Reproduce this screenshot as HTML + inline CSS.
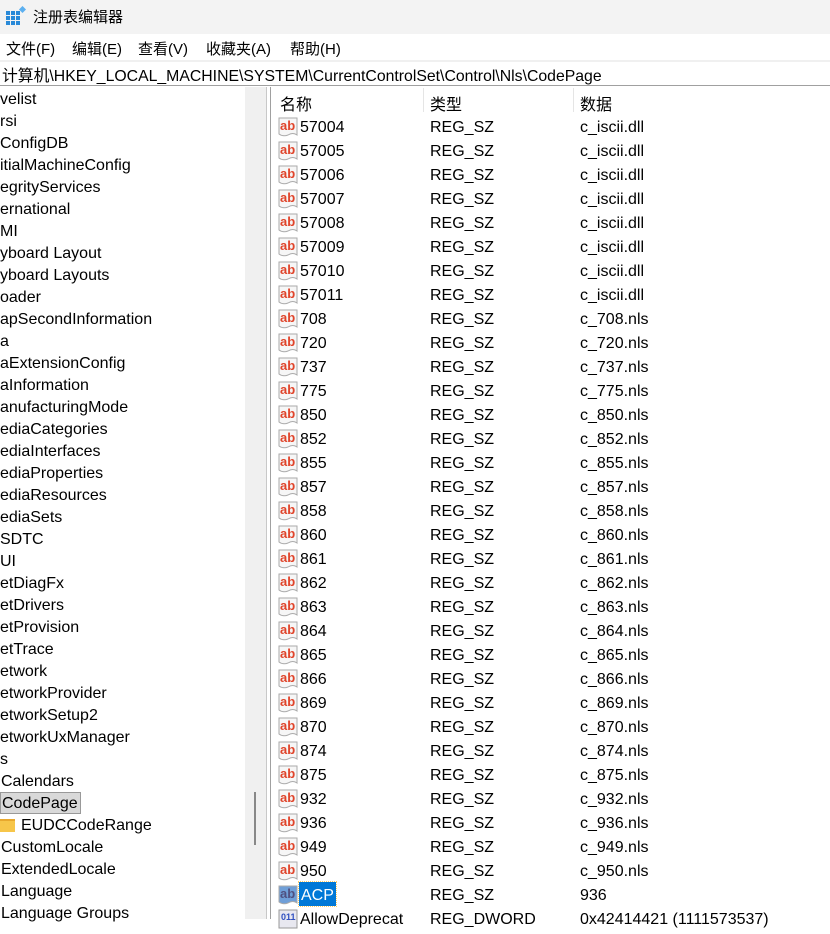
<!DOCTYPE html>
<html><head><meta charset="utf-8"><style>
*{margin:0;padding:0;box-sizing:border-box}
body{width:830px;height:919px;overflow:hidden;background:#fff;font-family:"Liberation Sans","Noto Sans CJK SC",sans-serif;font-size:16px;color:#000;position:relative}
.abs{position:absolute;white-space:nowrap}
#title{left:0;top:0;width:830px;height:34px;background:#f3f3f3}
#menu{left:0;top:34px;width:830px;height:26px;background:#fff;font-size:15px}
#addr{left:0;top:60px;width:830px;height:26px;background:#fff;border-top:2px solid #f0f0f0;border-bottom:1px solid #a0a0a0}
.tr{position:absolute;left:0;height:22px;line-height:24px}
.lr{position:absolute;left:272px;width:558px;height:24px;line-height:28px}
.ic{position:absolute;left:6px;top:3px;width:21px;height:20px}
.n{position:absolute;left:28px}
.t{position:absolute;left:158px}
.d{position:absolute;left:308px}
</style></head><body>
<div class="abs" id="title">
<svg class="abs" style="left:6px;top:6px" width="20" height="20" viewBox="0 0 20 20">
<g fill="#2a8ad8"><rect x="0" y="5" width="4" height="4"/><rect x="5" y="5" width="4" height="4"/><rect x="10" y="5" width="4" height="4"/><rect x="0" y="10" width="4" height="4"/><rect x="5" y="10" width="4" height="4"/><rect x="10" y="10" width="4" height="4"/><rect x="0" y="15" width="4" height="4"/><rect x="5" y="15" width="4" height="4"/><rect x="10" y="15" width="4" height="4"/></g>
<rect x="14" y="1" width="5" height="5" fill="#5cb0f0" transform="rotate(45 16.5 3.5)"/></svg>
<div class="abs" style="left:33px;top:6px;font-size:15px">注册表编辑器</div>
</div>
<div class="abs" id="menu">
<span class="abs" style="left:6px;top:4px">文件(F)</span>
<span class="abs" style="left:72px;top:4px">编辑(E)</span>
<span class="abs" style="left:138px;top:4px">查看(V)</span>
<span class="abs" style="left:206px;top:4px">收藏夹(A)</span>
<span class="abs" style="left:290px;top:4px">帮助(H)</span>
</div>
<div class="abs" id="addr"><span class="abs" style="left:2px;top:1px;font-size:15.8px">计算机\HKEY_LOCAL_MACHINE\SYSTEM\CurrentControlSet\Control\Nls\CodePage</span></div>
<div class="abs" style="left:245px;top:87px;width:21px;height:832px;background:#f0f0f0"></div>
<div class="abs" style="left:254px;top:792px;width:2px;height:53px;background:#888"></div>
<div class="abs" style="left:266px;top:87px;width:1px;height:832px;background:#c8c8c8"></div>
<div class="abs" style="left:270px;top:87px;width:1px;height:832px;background:#a0a0a0"></div>
<div id="tree">
<div class="tr" style="top:88px">velist</div>
<div class="tr" style="top:110px">rsi</div>
<div class="tr" style="top:132px">ConfigDB</div>
<div class="tr" style="top:154px">itialMachineConfig</div>
<div class="tr" style="top:176px">egrityServices</div>
<div class="tr" style="top:198px">ernational</div>
<div class="tr" style="top:220px">MI</div>
<div class="tr" style="top:242px">yboard Layout</div>
<div class="tr" style="top:264px">yboard Layouts</div>
<div class="tr" style="top:286px">oader</div>
<div class="tr" style="top:308px">apSecondInformation</div>
<div class="tr" style="top:330px">a</div>
<div class="tr" style="top:352px">aExtensionConfig</div>
<div class="tr" style="top:374px">aInformation</div>
<div class="tr" style="top:396px">anufacturingMode</div>
<div class="tr" style="top:418px">ediaCategories</div>
<div class="tr" style="top:440px">ediaInterfaces</div>
<div class="tr" style="top:462px">ediaProperties</div>
<div class="tr" style="top:484px">ediaResources</div>
<div class="tr" style="top:506px">ediaSets</div>
<div class="tr" style="top:528px">SDTC</div>
<div class="tr" style="top:550px">UI</div>
<div class="tr" style="top:572px">etDiagFx</div>
<div class="tr" style="top:594px">etDrivers</div>
<div class="tr" style="top:616px">etProvision</div>
<div class="tr" style="top:638px">etTrace</div>
<div class="tr" style="top:660px">etwork</div>
<div class="tr" style="top:682px">etworkProvider</div>
<div class="tr" style="top:704px">etworkSetup2</div>
<div class="tr" style="top:726px">etworkUxManager</div>
<div class="tr" style="top:748px">s</div>
<div class="tr" style="top:770px;left:1px">Calendars</div>
<div class="tr" style="top:792px;left:0;padding:0 2px 0 1px;background:#d9d9d9;border:1px solid #999;line-height:22px">CodePage</div>
<div class="tr" style="top:814px;left:21px">EUDCCodeRange</div>
<div class="abs" style="left:0;top:819px;width:15px;height:13px;background:#f7c64a;border-top:2px solid #e8a82e"></div>
<div class="tr" style="top:836px;left:1px">CustomLocale</div>
<div class="tr" style="top:858px;left:1px">ExtendedLocale</div>
<div class="tr" style="top:880px;left:1px">Language</div>
<div class="tr" style="top:902px;left:1px">Language Groups</div>
</div>
<div class="abs" style="left:272px;top:88px;width:558px;height:24px">
<span class="abs" style="left:8px;top:3px">名称</span>
<span class="abs" style="left:158px;top:3px">类型</span>
<span class="abs" style="left:308px;top:3px">数据</span>
<div class="abs" style="left:151px;top:0;width:1px;height:24px;background:#e5e5e5"></div>
<div class="abs" style="left:301px;top:0;width:1px;height:24px;background:#e5e5e5"></div>
</div>
<div id="list"></div>
<script>
var rows=[["57004","c_iscii.dll"],["57005","c_iscii.dll"],["57006","c_iscii.dll"],["57007","c_iscii.dll"],["57008","c_iscii.dll"],["57009","c_iscii.dll"],["57010","c_iscii.dll"],["57011","c_iscii.dll"]];
["708","720","737","775","850","852","855","857","858","860","861","862","863","864","865","866","869","870","874","875","932","936","949","950"].forEach(function(c){rows.push([c,"c_"+c+".nls"])});
rows.push(["ACP","936"]);rows.push(["AllowDeprecat","0x42414421 (1111573537)","REG_DWORD"]);
var h="";rows.forEach(function(r,i){var y=114+i*24;var acp=r[0]=="ACP";var dw=r[2];
var ic=dw?'<svg class="ic" viewBox="0 0 21 20"><rect x="1" y="1" width="18" height="18" fill="#e8e8f0" stroke="#999"/><text x="3" y="11" font-size="9" font-weight="bold" fill="#3050c0" font-family="Liberation Sans">011</text></svg>':
'<svg class="ic" viewBox="0 0 21 20"><path d="M1 1H19V18Q15 15 10 18Q5 20 1 17Z" fill="'+(acp?'#6f9fd8':'#f6f6f6')+'" stroke="#aaa"/><text x="2" y="13" font-size="13" font-weight="bold" fill="'+(acp?'#505080':'#e0442a')+'" font-family="Liberation Sans">ab</text></svg>';
var nm=acp?'<span class="n" style="background:#0078d7;color:#fff;padding:0 2px;left:27px;height:24px;outline:1px dotted #ffcc66">ACP</span>':'<span class="n">'+r[0]+'</span>';
h+='<div class="lr" style="top:'+y+'px">'+ic+nm+'<span class="t">'+(dw||"REG_SZ")+'</span><span class="d">'+r[1]+'</span></div>';});
document.getElementById("list").innerHTML=h;
</script>
</body></html>
